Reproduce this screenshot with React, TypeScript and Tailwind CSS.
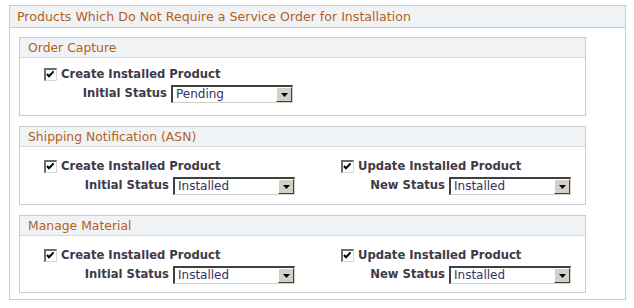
const font = { fontFamily: '"DejaVu Sans", Verdana, sans-serif' };

function Check() {
  return (
    <span className="inline-block w-[13px] h-[13px] border-t-2 border-l-2 border-b border-r border-t-[#6b6b6b] border-l-[#6b6b6b] border-b-[#d8d8d8] border-r-[#d8d8d8] bg-white relative shrink-0">
      <svg width="9" height="9" viewBox="0 0 9 9" className="absolute left-[0px] top-[0px]">
        <path d="M1 4 L3 6.2 L7.6 1.4" stroke="#000" strokeWidth="2" fill="none" />
      </svg>
    </span>
  );
}

function Select({ value }: { value: string }) {
  return (
    <div className="w-[122px] h-[18px] flex border-t-2 border-l-2 border-b border-r border-t-[#404040] border-l-[#404040] border-b-[#d4d0c8] border-r-[#d4d0c8] bg-white">
      <span className="flex-1 text-[12px] leading-[15px] pl-[3px] text-[#33335f]">{value}</span>
      <span className="w-[16px] h-[15px] bg-[#d4d0c8] border border-t-white border-l-white border-b-[#404040] border-r-[#404040] flex items-center justify-center">
        <svg width="7" height="4" viewBox="0 0 7 4">
          <path d="M0 0 H7 L3.5 4 Z" fill="#000" />
        </svg>
      </span>
    </div>
  );
}

function Field({
  check,
  label,
  value,
  labelW,
}: {
  check: string;
  label: string;
  value: string;
  labelW: string;
}) {
  return (
    <div className="flex flex-col">
      <div className="flex items-center gap-[4px] h-[13px]">
        <Check />
        <span className="text-[11.6px] leading-[13px] font-bold text-[#3f3a48]">{check}</span>
      </div>
      <div className="flex items-center mt-[4px]">
        <span className={`${labelW} text-right pr-[4px] text-[11.6px] font-bold text-[#3f3a48]`}>
          {label}
        </span>
        <Select value={value} />
      </div>
    </div>
  );
}

function Box({
  title,
  children,
  pad,
}: {
  title: string;
  children: React.ReactNode;
  pad: string;
}) {
  return (
    <div className="border border-[#c9cbcf] w-[567px]">
      <div className="h-[20px] bg-[#f0f3f5] border-b border-[#d8dade] pl-[8px] text-[12.4px] leading-[19px] text-[#b5601d]">
        {title}
      </div>
      <div className={`flex ${pad}`}>{children}</div>
    </div>
  );
}

export default function App() {
  return (
    <div className="w-[634px] h-[308px] bg-white pt-[5px] pl-[9px]" style={font}>
      <div className="w-[617px] h-[295px] border border-[#c9cbcf]">
        <div className="h-[22px] bg-[#f0f3f5] border-b border-[#c9cbcf] pl-[7px] text-[12.6px] leading-[21px] text-[#b5601d]">
          Products Which Do Not Require a Service Order for Installation
        </div>
        <div className="flex flex-col gap-[10px] pl-[9px] pt-[9px]">
          <Box title="Order Capture" pad="pl-[24px] pt-[10px] h-[57px]">
            <Field check="Create Installed Product" label="Initial Status" value="Pending" labelW="w-[127px]" />
          </Box>
          <Box title="Shipping Notification (ASN)" pad="pl-[24px] pt-[13px] h-[57px]">
            <div className="w-[297px]">
              <Field check="Create Installed Product" label="Initial Status" value="Installed" labelW="w-[129px]" />
            </div>
            <Field check="Update Installed Product" label="New Status" value="Installed" labelW="w-[108px]" />
          </Box>
          <Box title="Manage Material" pad="pl-[24px] pt-[13px] h-[56px]">
            <div className="w-[297px]">
              <Field check="Create Installed Product" label="Initial Status" value="Installed" labelW="w-[129px]" />
            </div>
            <Field check="Update Installed Product" label="New Status" value="Installed" labelW="w-[108px]" />
          </Box>
        </div>
      </div>
    </div>
  );
}
